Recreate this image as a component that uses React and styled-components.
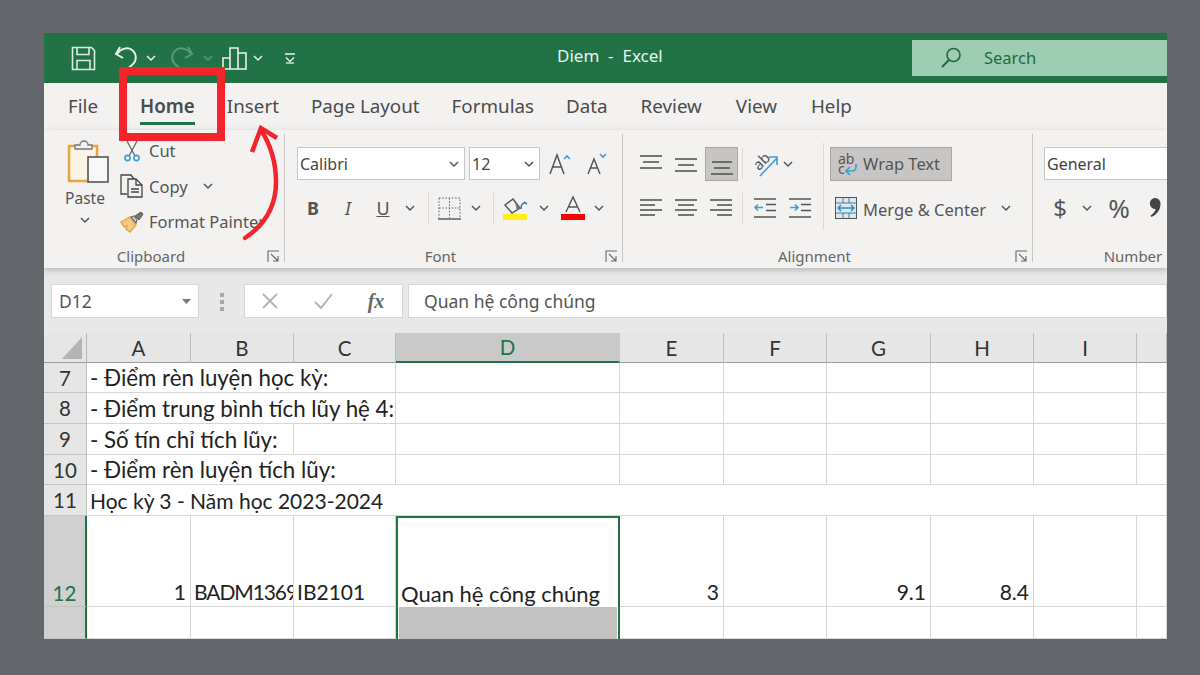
import React from 'react';
import styled, { createGlobalStyle } from 'styled-components';

const GREEN = '#217346';
const INK = '#555';
const BLUE = '#3b9fd6';
const ORANGE = '#e9a33f';
const RED = '#f4242c';
const UI = '"Noto Sans", "Open Sans", sans-serif';
const CELL = 'Lato, "Open Sans", sans-serif';

const Global = createGlobalStyle`
  html, body { margin: 0; padding: 0; background: #63666a; }
  * { box-sizing: border-box; }
  svg { overflow: visible; }
`;

const Page = styled.div`
  position: relative;
  width: 1200px;
  height: 675px;
  padding: 33px 33px 36px 44px;
  background: #63666a;
  overflow: hidden;
`;

const Excel = styled.div`
  height: 606px;
  display: flex;
  flex-direction: column;
  overflow: hidden;
  background: #fff;
  font-family: ${UI};
  color: ${INK};
`;

// Title bar
const TitleBar = styled.div`
  height: 50px;
  flex: none;
  display: flex;
  align-items: center;
  background: ${GREEN};
  color: #e8f2ec;
`;

const QuickAccess = styled.div`
  width: 513px;
  display: flex;
  align-items: center;
  padding-left: 26px;
`;

const Title = styled.div`
  padding-bottom: 5px;
  font-size: 17px;
  white-space: pre;
`;

const SearchBox = styled.div`
  margin-left: auto;
  width: 255px;
  height: 36px;
  display: flex;
  align-items: center;
  gap: 22px;
  padding-left: 28px;
  background: #9fcdb3;
  color: #1e6b41;
  font-size: 16.5px;
`;

const SearchText = styled.span`
  padding-bottom: 2px;
`;

// Tabs
const Tabs = styled.div`
  height: 47px;
  flex: none;
  display: flex;
  gap: 32px;
  padding-left: 24px;
  background: #f3f2f1;
`;

const Tab = styled.div`
  position: relative;
  margin-left: ${(p) => p.$ml || 0}px;
  padding-top: 10px;
  font-size: 18.8px;
  line-height: 26px;
  font-weight: ${(p) => (p.$active ? 600 : 400)};
  color: #4b4b4b;
  white-space: nowrap;
  ${(p) => p.$active && `
    &::after {
      content: '';
      position: absolute;
      left: 0;
      right: 0;
      top: 39px;
      height: 3px;
      background: ${GREEN};
    }
  `}
`;

// Ribbon
const Ribbon = styled.div`
  position: relative;
  z-index: 1;
  height: 138px;
  flex: none;
  display: flex;
  background: #f3f2f1;
  box-shadow: 0 2px 6px rgba(0, 0, 0, 0.22);
`;

const Group = styled.div`
  width: ${(p) => p.$w}px;
  flex: none;
  display: flex;
  flex-direction: column;
`;

const GroupRule = styled.div`
  width: 1px;
  flex: none;
  margin: 4px 0 6px;
  background: #c8c6c4;
`;

const GroupBody = styled.div`
  flex: 1;
  display: flex;
  flex-direction: ${(p) => p.$dir || 'column'};
  padding: ${(p) => p.$pad || '17px 0 0'};
`;

const GroupFooter = styled.div`
  height: 24px;
  flex: none;
  display: flex;
  align-items: center;
`;

const GroupLabel = styled.div`
  flex: 1;
  text-align: center;
  font-size: 15px;
  color: #666;
`;

const Launcher = styled.div`
  width: 26px;
  display: flex;
  padding-left: 9px;
`;

const PasteColumn = styled.div`
  width: 60px;
  flex: none;
  display: flex;
  flex-direction: column;
  align-items: center;
  font-size: 15.5px;
  line-height: 22px;
`;

const PasteImage = styled.div`
  height: 46px;
  margin-left: 8px;
`;

const PasteText = styled.div`
  margin: 2px 0 8px;
`;

const ClipList = styled.div`
  display: flex;
  flex-direction: column;
  margin-top: -6px;
`;

const ClipRow = styled.div`
  height: 35.5px;
  display: flex;
  align-items: center;
  font-size: 16.5px;
  white-space: nowrap;
`;

const ClipIcon = styled.div`
  width: 34px;
  flex: none;
  display: flex;
  justify-content: center;
`;

const ToolRow = styled.div`
  height: ${(p) => p.$h || 33}px;
  margin-top: ${(p) => p.$mt || 0}px;
  padding-left: ${(p) => p.$pl || 0}px;
  display: flex;
  align-items: center;
`;

const Slot = styled.div`
  width: ${(p) => p.$w}px;
  margin-left: ${(p) => p.$ml || 0}px;
  flex: none;
  display: flex;
  align-items: center;
  justify-content: center;
`;

const Combo = styled.div`
  width: ${(p) => p.$w}px;
  height: 33px;
  margin-right: ${(p) => p.$mr || 0}px;
  flex: none;
  display: flex;
  align-items: center;
  justify-content: space-between;
  padding: 0 5px 0 2px;
  background: #fff;
  border: 1px solid #c8c6c4;
  font-size: 16px;
  color: #444;
`;

const ToolRule = styled.div`
  width: 1px;
  height: 31px;
  flex: none;
  background: #dcdad8;
`;

const ActiveBtn = styled.div`
  width: ${(p) => p.$w}px;
  height: 34px;
  margin-left: ${(p) => p.$ml || 0}px;
  flex: none;
  display: flex;
  align-items: center;
  background: #c8c6c4;
  border: 1px solid #a9a7a5;
  font-size: 16.5px;
  color: #555;
`;

const AlignLeft = styled.div`
  width: 200px;
  flex: none;
`;

const AlignRule = styled.div`
  width: 1px;
  height: 87px;
  margin-top: -4px;
  flex: none;
  background: #dcdad8;
`;

const AlignRight = styled.div`
  flex: 1;
  padding-left: 6px;
`;

const ToolText = styled.span`
  margin-left: 6px;
  padding-top: 3px;
  font-size: 16.5px;
  white-space: nowrap;
  color: #555;
`;

const Glyph = styled.span`
  font-family: ${UI};
  font-size: ${(p) => p.$size || 18}px;
  font-weight: ${(p) => p.$weight || 400};
  font-style: ${(p) => (p.$italic ? 'italic' : 'normal')};
  text-decoration: ${(p) => (p.$under ? 'underline' : 'none')};
  color: #555;
  line-height: 1;
`;

// Formula bar
const FormulaBar = styled.div`
  height: 65px;
  flex: none;
  display: flex;
  align-items: flex-start;
  padding: 16px 0 0 7px;
  background: #e8e8e8;
`;

const FormulaBox = styled.div`
  height: 34px;
  width: ${(p) => (p.$w ? `${p.$w}px` : 'auto')};
  flex: ${(p) => (p.$w ? 'none' : '1')};
  display: flex;
  align-items: center;
  background: #fff;
  border: 1px solid #d6d6d6;
  font-size: 17.5px;
  color: #555;
`;

const NameText = styled.span`
  flex: 1;
  padding-left: 7px;
`;

const Grip = styled.div`
  width: 45px;
  flex: none;
  display: flex;
  justify-content: center;
  padding-top: 9px;
`;

const FormulaGap = styled.div`
  width: 5px;
  flex: none;
`;

const Fx = styled.span`
  font-family: "Liberation Serif", serif;
  font-style: italic;
  font-weight: 700;
  font-size: 20px;
  color: #666;
`;

const FormulaBtn = styled.div`
  width: ${(p) => p.$w}px;
  flex: none;
  display: flex;
  justify-content: center;
`;

const FormulaText = styled.span`
  padding-left: 15px;
`;

// Sheet
const Sheet = styled.div`
  flex: 1;
  display: grid;
  grid-template-columns: 43px 104px 103px 102px 224px 104px 103px 104px 103px 103px 1fr;
  grid-template-rows: 30px 30px 31px 31px 30px 31px 91px 32px;
  background: #fff;
  font-family: ${CELL};
  color: #222;
  overflow: hidden;
`;

const Corner = styled.div`
  background: #e6e6e6;
  border-right: 1px solid #b8b8b8;
  border-bottom: 1px solid #9c9c9c;
  display: flex;
  align-items: flex-end;
  justify-content: flex-end;
  padding: 0 4px 3px 0;
`;

const ColHead = styled.div`
  display: flex;
  align-items: center;
  justify-content: center;
  font-size: 20.5px;
  background: ${(p) => (p.$on ? '#c9c9c9' : '#e6e6e6')};
  border-right: 1px solid ${(p) => (p.$on ? '#c9c9c9' : '#bdbdbd')};
  border-bottom: ${(p) => (p.$on ? `2px solid ${GREEN}` : '1px solid #9c9c9c')};
  color: ${(p) => (p.$on ? GREEN : '#333')};
`;

const RowHead = styled.div`
  display: flex;
  align-items: ${(p) => (p.$on ? 'flex-end' : 'center')};
  justify-content: center;
  padding-bottom: ${(p) => (p.$on ? '1px' : '0')};
  font-size: 20.5px;
  background: ${(p) => (p.$on ? '#d0d0d0' : '#e6e6e6')};
  border-right: ${(p) => (p.$on ? `2px solid ${GREEN}` : '1px solid #bdbdbd')};
  border-bottom: 1px solid #c4c4c4;
  color: ${(p) => (p.$on ? GREEN : '#333')};
`;

const Cell = styled.div`
  grid-column: span ${(p) => p.$span || 1};
  display: flex;
  align-items: flex-end;
  justify-content: ${(p) => (p.$right ? 'flex-end' : 'flex-start')};
  padding: 0 ${(p) => (p.$right ? '4px' : '0')} 1px ${(p) => (p.$right ? '0' : '3px')};
  border-right: 1px solid #d6d6d6;
  border-bottom: 1px solid #d6d6d6;
  font-size: ${(p) => (p.$digits ? '21px' : '22.3px')};
  letter-spacing: ${(p) => (p.$tight ? '-1.1px' : 'normal')};
  white-space: nowrap;
  overflow: hidden;
  line-height: 27px;
`;

const ActiveCell = styled(Cell)`
  border: 2px solid ${GREEN};
  border-bottom: 0;
  padding-left: 3px;
  padding-bottom: 0;
  font-size: 22px;
`;

const RangeCell = styled.div`
  border-left: 2px solid ${GREEN};
  border-right: 2px solid ${GREEN};
  background: #fff;
  display: flex;
`;

const RangeFill = styled.div`
  flex: 1;
  margin: 0 1px;
  background: #c2c2c2;
`;

// Red annotation drawn over the screenshot
const Highlight = styled.div`
  position: absolute;
  z-index: 2;
  left: 119px;
  top: 67px;
  width: 106px;
  height: 74px;
  border: 8px solid ${RED};
`;

const ArrowLayer = styled.svg`
  position: absolute;
  z-index: 2;
  left: 236px;
  top: 120px;
`;

// Icons
const Chevron = ({ color = '#555', w = 10 }) => (
  <svg width={w} height="6" viewBox="0 0 10 6">
    <path d="M1 1l4 4 4-4" fill="none" stroke={color} strokeWidth="1.5" />
  </svg>
);

const Line = ({ w = 24, h = 24, children }) => (
  <svg width={w} height={h} viewBox={`0 0 ${w} ${h}`} fill="none" strokeWidth="1.6">
    {children}
  </svg>
);

const SaveIcon = () => (
  <Line w={25} h={25}>
    <path d="M1.500 1.500h19l3 3v19h-22z" stroke="#dcebe2" />
    <path d="M6 1.500v7h12v-7M6 23.500v-9h13v9" stroke="#dcebe2" />
  </Line>
);
const UndoIcon = ({ color = '#e8f2ec' }) => (
  <Line w={24} h={26}>
    <path d="M3 9C7 3 14 2 18 5C23 9 23 16 18 20L11 26" stroke={color} strokeWidth="2" />
    <path d="M6 2L2 9l7 4" stroke={color} strokeWidth="2" />
  </Line>
);
const RedoIcon = () => (
  <Line w={24} h={26}>
    <path d="M21 9C17 3 10 2 6 5C1 9 1 16 6 20L13 26" stroke="#5a9a78" strokeWidth="2" />
    <path d="M18 2l4 7-7 4" stroke="#5a9a78" strokeWidth="2" />
  </Line>
);
const ChartIcon = () => (
  <Line w={25} h={23}>
    <path d="M1 22V11h7v11M8 22V1h8v21M16 22V6h8v16H1" stroke="#e8f2ec" />
  </Line>
);
const CustomizeIcon = () => (
  <Line w={12} h={12}>
    <path d="M1 2h10M2 5.500l4 4 4-4" stroke="#e8f2ec" strokeWidth="1.3" />
    <path d="M2 11h8" stroke="#e8f2ec" strokeWidth="1.3" />
  </Line>
);
const SearchIcon = () => (
  <Line w={22} h={22}>
    <circle cx="13.500" cy="8" r="6.500" stroke="#1e6b41" />
    <path d="M9 13L2 20" stroke="#1e6b41" strokeWidth="2" />
  </Line>
);

const PasteIcon = () => (
  <svg width="44" height="46" viewBox="0 0 44 46" fill="none">
    <rect x="2" y="7" width="28" height="35" fill="#fbf3e3" stroke={ORANGE} strokeWidth="2.500" />
    <path d="M8 10V6h5a4 4 0 0 1 8 0h4v4z" fill="#f3f2f1" stroke="#777" strokeWidth="1.300" />
    <rect x="21" y="18" width="20" height="25" fill="#f8f8f8" stroke="#555" strokeWidth="1.600" />
  </svg>
);
const CutIcon = () => (
  <svg width="18" height="22" viewBox="0 0 18 22" fill="none">
    <path d="M4 1l8 15M14 1L6 16" stroke="#666" strokeWidth="1.300" />
    <circle cx="4.500" cy="18" r="2.600" stroke={BLUE} strokeWidth="1.600" />
    <circle cx="13.500" cy="18" r="2.600" stroke={BLUE} strokeWidth="1.600" />
  </svg>
);
const CopyIcon = () => (
  <svg width="24" height="24" viewBox="0 0 24 24" fill="none" stroke="#444" strokeWidth="1.300">
    <path d="M7 20H1V1h10l3 4" />
    <path d="M8 5h8l6 6v12H8z" fill="#f3f2f1" />
    <path d="M16 5v6h6M11 15h8M11 18h8" />
  </svg>
);
const PainterIcon = () => (
  <svg width="24" height="22" viewBox="0 0 24 22" fill="none">
    <path d="M1 11l9-5 6 8-6 7-4-3 1-3-3 1z" fill="#f4c987" stroke={ORANGE} strokeWidth="1.400" />
    <path d="M11 6l3-1 3 4-1 3z" fill="#ddd" stroke="#666" strokeWidth="1.200" />
    <path d="M15 5l6-4 2 2-4 6z" fill="#777" stroke="#555" />
  </svg>
);
const LauncherIcon = () => (
  <svg width="13" height="13" viewBox="0 0 13 13" fill="none" stroke="#666" strokeWidth="1.100">
    <path d="M12 1H1v11M4 4l7 7M11 6v5H6" />
  </svg>
);
const GrowIcon = ({ up, size }) => (
  <svg width="22" height="24" viewBox="0 0 22 24" fill="none">
    <path d={up ? 'M1 22L8 3l7 19M4 15h9' : 'M3 22l6-15 6 15M5.500 16h7'} stroke="#555" strokeWidth={size} />
    <path d={up ? 'M15 7l3-3 3 3' : 'M15 2l3 3 3-3'} stroke={BLUE} strokeWidth="1.600" />
  </svg>
);
const BorderIcon = () => (
  <svg width="23" height="23" viewBox="0 0 23 23" fill="none" stroke="#666">
    <path d="M1 1h21v20M1 1v20M11.500 1v20M1 11h21" strokeDasharray="1.600 1.600" />
    <path d="M0 22h23" strokeWidth="1.600" />
  </svg>
);
const FillIcon = () => (
  <svg width="24" height="24" viewBox="0 0 24 24" fill="none">
    <path d="M2 9l8-6 7 9-8 5z" stroke="#555" strokeWidth="1.400" />
    <path d="M12 6l5 6-3 3z" fill="#777" />
    <path d="M18 13c0-5 2-6 4-6l-1-1 3 2" stroke="#2f7fc1" strokeWidth="1.600" />
    <rect x="0" y="18" width="24" height="6" fill="#ffef12" />
  </svg>
);
const FontColorIcon = () => (
  <svg width="24" height="24" viewBox="0 0 24 24" fill="none">
    <path d="M5 16L12 1l7 15M8 11h8" stroke="#555" strokeWidth="1.400" />
    <rect x="0" y="18" width="24" height="6" fill="#f00" />
  </svg>
);
const Lines = ({ rows }) => (
  <svg width="22" height="24" viewBox="0 0 22 24" fill="none" stroke="#555" strokeWidth="1.600">
    {rows.map(([x1, x2, y]) => (
      <path key={y} d={`M${x1} ${y}H${x2}`} />
    ))}
  </svg>
);
const OrientIcon = () => (
  <svg width="26" height="28" viewBox="0 0 26 28">
    <text x="0" y="17" fontFamily={UI} fontSize="15" fill="#555" transform="rotate(-45 8 12)">ab</text>
    <path d="M7 26L24 8M16 7h8v8" fill="none" stroke={BLUE} strokeWidth="1.600" />
  </svg>
);
const IndentIcon = ({ dir }) => (
  <svg width="22" height="22" viewBox="0 0 22 22" fill="none">
    <path d="M0 2h22M12 7.500h10M12 13.500h10M0 20h22" stroke="#555" strokeWidth="1.600" />
    <path d={dir === 'in' ? 'M1 10.500h8M6 7.500l3 3-3 3' : 'M9 10.500H1M4 7.500l-3 3 3 3'} stroke={BLUE} strokeWidth="1.600" />
  </svg>
);
const WrapIcon = () => (
  <svg width="24" height="28" viewBox="0 0 24 28">
    <text x="3" y="14" fontFamily={UI} fontSize="14" fill="#555">ab</text>
    <text x="3" y="24" fontFamily={UI} fontSize="14" fill="#555">c</text>
    <path d="M21 14v3a4 4 0 0 1-4 4H11M15 17l-4 4 4 4" fill="none" stroke={BLUE} strokeWidth="1.700" />
  </svg>
);
const MergeIcon = () => (
  <svg width="22" height="22" viewBox="0 0 22 22" fill="none">
    <rect x="0.500" y="0.500" width="21" height="21" fill="#dbe8f1" stroke="#555" />
    <path d="M0 6h22M0 16h22M8 0v6M14 0v6M8 16v6M14 16v6" stroke="#3f6f8f" strokeWidth="0.900" />
    <path d="M3 11h16M6 8l-3 3 3 3M16 8l3 3-3 3" stroke="#2f86c4" strokeWidth="1.400" />
  </svg>
);
const CommaIcon = () => (
  <svg width="12" height="20" viewBox="0 0 12 20" fill="#444">
    <path d="M6 0a5.500 5.500 0 0 1 5.500 6c0 6-4 11-9 13l-1-1.500c3-2 5-4.500 5.200-6.500A5.500 5.500 0 1 1 6 0z" />
  </svg>
);
const GripIcon = () => (
  <svg width="4" height="18" viewBox="0 0 4 18" fill="#a8a8a8">
    <rect width="4" height="4" />
    <rect y="7" width="4" height="4" />
    <rect y="14" width="4" height="4" />
  </svg>
);
const CrossIcon = () => (
  <svg width="18" height="18" viewBox="0 0 18 18" fill="none" stroke="#b4b4b4" strokeWidth="1.800">
    <path d="M2 2l14 14M16 2L2 16" />
  </svg>
);
const CheckIcon = () => (
  <svg width="20" height="18" viewBox="0 0 20 18" fill="none" stroke="#b4b4b4" strokeWidth="2">
    <path d="M2 10l6 6L19 2" />
  </svg>
);
const DropTriangle = () => (
  <svg width="9" height="5" viewBox="0 0 9 5" fill="#777">
    <path d="M0 0h9L4.500 5z" />
  </svg>
);

const COLS = ['A', 'B', 'C', 'D', 'E', 'F', 'G', 'H', 'I', ''];

// span: how many columns the cell covers, its text runs over them
const ROWS = [
  { n: 7, cells: [{ t: '- Điểm rèn luyện học kỳ:', span: 3 }, {}, {}, {}, {}, {}, {}, {}] },
  { n: 8, cells: [{ t: '- Điểm trung bình tích lũy hệ 4:', span: 3 }, {}, {}, {}, {}, {}, {}, {}] },
  { n: 9, cells: [{ t: '- Số tín chỉ tích lũy:', span: 2 }, {}, {}, {}, {}, {}, {}, {}, {}] },
  { n: 10, cells: [{ t: '- Điểm rèn luyện tích lũy:', span: 3 }, {}, {}, {}, {}, {}, {}, {}] },
  { n: 11, cells: [{ t: 'Học kỳ 3 - Năm học 2023-2024', span: 10, digits: true }] },
];

const App = () => (
  <Page>
    <Global />
    <Excel>
      <TitleBar>
        <QuickAccess>
          <Slot $w={26}><SaveIcon /></Slot>
          <Slot $w={26} $ml={17}><UndoIcon /></Slot>
          <Slot $w={12} $ml={6}><Chevron color="#e8f2ec" /></Slot>
          <Slot $w={26} $ml={12}><RedoIcon /></Slot>
          <Slot $w={12} $ml={7}><Chevron color="#5a9a78" /></Slot>
          <Slot $w={26} $ml={7}><ChartIcon /></Slot>
          <Slot $w={12} $ml={5}><Chevron color="#e8f2ec" /></Slot>
          <Slot $w={14} $ml={19}><CustomizeIcon /></Slot>
        </QuickAccess>
        <Title>Diem  -  Excel</Title>
        <SearchBox>
          <SearchIcon />
          <SearchText>Search</SearchText>
        </SearchBox>
      </TitleBar>

      <Tabs>
        <Tab>File</Tab>
        <Tab $active $ml={10}>Home</Tab>
        <Tab>Insert</Tab>
        <Tab>Page Layout</Tab>
        <Tab>Formulas</Tab>
        <Tab>Data</Tab>
        <Tab $ml={1}>Review</Tab>
        <Tab $ml={2}>View</Tab>
        <Tab $ml={2}>Help</Tab>
      </Tabs>

      <Ribbon>
        <Group $w={240}>
          <GroupBody $dir="row" $pad="9px 0 0 11px">
            <PasteColumn>
              <PasteImage><PasteIcon /></PasteImage>
              <PasteText>Paste</PasteText>
              <Chevron />
            </PasteColumn>
            <ClipList>
              <ClipRow><ClipIcon><CutIcon /></ClipIcon>Cut</ClipRow>
              <ClipRow>
                <ClipIcon><CopyIcon /></ClipIcon>Copy
                <Slot $w={10} $ml={15}><Chevron /></Slot>
              </ClipRow>
              <ClipRow><ClipIcon><PainterIcon /></ClipIcon>Format Painter</ClipRow>
            </ClipList>
          </GroupBody>
          <GroupFooter>
            <GroupLabel>Clipboard</GroupLabel>
            <Launcher><LauncherIcon /></Launcher>
          </GroupFooter>
        </Group>
        <GroupRule />

        <Group $w={337}>
          <GroupBody>
            <ToolRow $pl={12}>
              <Combo $w={168} $mr={4}>Calibri<Chevron /></Combo>
              <Combo $w={71}>12<Chevron /></Combo>
              <Slot $w={30} $ml={5}><GrowIcon up size="1.5" /></Slot>
              <Slot $w={30} $ml={6}><GrowIcon size="1.4" /></Slot>
            </ToolRow>
            <ToolRow $mt={12} $h={32} $pl={11}>
              <Slot $w={34}><Glyph $weight={700}>B</Glyph></Slot>
              <Slot $w={36}><Glyph $italic>I</Glyph></Slot>
              <Slot $w={34}><Glyph $under>U</Glyph></Slot>
              <Slot $w={20}><Chevron /></Slot>
              <Slot $w={16}><ToolRule /></Slot>
              <Slot $w={26}><BorderIcon /></Slot>
              <Slot $w={28}><Chevron /></Slot>
              <Slot $w={6}><ToolRule /></Slot>
              <Slot $w={38}><FillIcon /></Slot>
              <Slot $w={19}><Chevron /></Slot>
              <Slot $w={40}><FontColorIcon /></Slot>
              <Slot $w={12}><Chevron /></Slot>
            </ToolRow>
          </GroupBody>
          <GroupFooter>
            <GroupLabel>Font</GroupLabel>
            <Launcher><LauncherIcon /></Launcher>
          </GroupFooter>
        </Group>
        <GroupRule />

        <Group $w={409}>
          <GroupBody $dir="row">
            <AlignLeft>
              <ToolRow $pl={17}>
                <Slot $w={22}><Lines rows={[[0, 22, 4], [3, 19, 10], [0, 22, 16]]} /></Slot>
                <Slot $w={22} $ml={13}><Lines rows={[[0, 22, 7], [3, 19, 13], [0, 22, 19]]} /></Slot>
                <ActiveBtn $w={33} $ml={8}>
                  <Slot $w={31}><Lines rows={[[1, 21, 10], [3, 19, 16], [0, 22, 22]]} /></Slot>
                </ActiveBtn>
                <Slot $w={1} $ml={4}><ToolRule /></Slot>
                <Slot $w={26} $ml={10}><OrientIcon /></Slot>
                <Slot $w={10} $ml={4}><Chevron /></Slot>
              </ToolRow>
              <ToolRow $mt={12} $h={32} $pl={17}>
                <Slot $w={22}><Lines rows={[[0, 22, 4], [0, 15, 9], [0, 22, 14], [0, 15, 19]]} /></Slot>
                <Slot $w={22} $ml={13}><Lines rows={[[0, 22, 4], [3, 19, 9], [0, 22, 14], [3, 19, 19]]} /></Slot>
                <Slot $w={22} $ml={13}><Lines rows={[[0, 22, 4], [7, 22, 9], [0, 22, 14], [7, 22, 19]]} /></Slot>
                <Slot $w={1} $ml={10}><ToolRule /></Slot>
                <Slot $w={22} $ml={11}><IndentIcon /></Slot>
                <Slot $w={22} $ml={13}><IndentIcon dir="in" /></Slot>
              </ToolRow>
            </AlignLeft>
            <AlignRule />
            <AlignRight>
              <ToolRow>
                <ActiveBtn $w={122}>
                  <Slot $w={32}><WrapIcon /></Slot>
                  Wrap Text
                </ActiveBtn>
              </ToolRow>
              <ToolRow $mt={12} $h={32} $pl={5}>
                <MergeIcon />
                <ToolText>Merge &amp; Center</ToolText>
                <Slot $w={10} $ml={15}><Chevron /></Slot>
              </ToolRow>
            </AlignRight>
          </GroupBody>
          <GroupFooter>
            <GroupLabel>Alignment</GroupLabel>
            <Launcher><LauncherIcon /></Launcher>
          </GroupFooter>
        </Group>
        <GroupRule />

        <Group $w={200}>
          <GroupBody>
            <ToolRow $pl={11}>
              <Combo $w={130}>General</Combo>
            </ToolRow>
            <ToolRow $mt={12} $h={32} $pl={17}>
              <Slot $w={20}><Glyph $size={24}>$</Glyph></Slot>
              <Slot $w={10} $ml={12}><Chevron /></Slot>
              <Slot $w={24} $ml={15}><Glyph $size={26}>%</Glyph></Slot>
              <Slot $w={12} $ml={18}><CommaIcon /></Slot>
            </ToolRow>
          </GroupBody>
          <GroupFooter>
            <GroupLabel>Number</GroupLabel>
          </GroupFooter>
        </Group>
      </Ribbon>

      <FormulaBar>
        <FormulaBox $w={148}>
          <NameText>D12</NameText>
          <Slot $w={24}><DropTriangle /></Slot>
        </FormulaBox>
        <Grip><GripIcon /></Grip>
        <FormulaBox $w={159}>
          <FormulaBtn $w={50}><CrossIcon /></FormulaBtn>
          <FormulaBtn $w={56}><CheckIcon /></FormulaBtn>
          <FormulaBtn $w={50}><Fx>fx</Fx></FormulaBtn>
        </FormulaBox>
        <FormulaGap />
        <FormulaBox>
          <FormulaText>Quan hệ công chúng</FormulaText>
        </FormulaBox>
      </FormulaBar>

      <Sheet>
        <Corner>
          <svg width="20" height="22" viewBox="0 0 20 22"><path d="M20 0v22H0z" fill="#b4b4b4" /></svg>
        </Corner>
        {COLS.map((c) => <ColHead key={c} $on={c === 'D'}>{c}</ColHead>)}

        {ROWS.map((r) => (
          <React.Fragment key={r.n}>
            <RowHead>{r.n}</RowHead>
            {r.cells.map((c, i) => <Cell key={i} $span={c.span} $digits={c.digits}>{c.t}</Cell>)}
          </React.Fragment>
        ))}

        <RowHead $on>12</RowHead>
        <Cell $right $digits>1</Cell>
        <Cell $digits $tight>BADM1369</Cell>
        <Cell $digits>IB2101</Cell>
        <ActiveCell>Quan hệ công chúng</ActiveCell>
        <Cell $right $digits>3</Cell>
        <Cell />
        <Cell $right $digits>9.1</Cell>
        <Cell $right $digits>8.4</Cell>
        <Cell />
        <Cell />

        <RowHead $on />
        <Cell />
        <Cell />
        <Cell />
        <RangeCell><RangeFill /></RangeCell>
        <Cell />
        <Cell />
        <Cell />
        <Cell />
        <Cell />
        <Cell />
      </Sheet>
    </Excel>

    <Highlight />
    <ArrowLayer width="50" height="125" viewBox="0 0 50 125" fill="none" stroke={RED}>
      <path d="M9 118C30 104 40 84 40 62C40 42 34 24 25 10" strokeWidth="4.500" strokeLinecap="round" />
      <path d="M16 32L25 8L41 18" strokeWidth="4.500" />
    </ArrowLayer>
  </Page>
);

export default App;
